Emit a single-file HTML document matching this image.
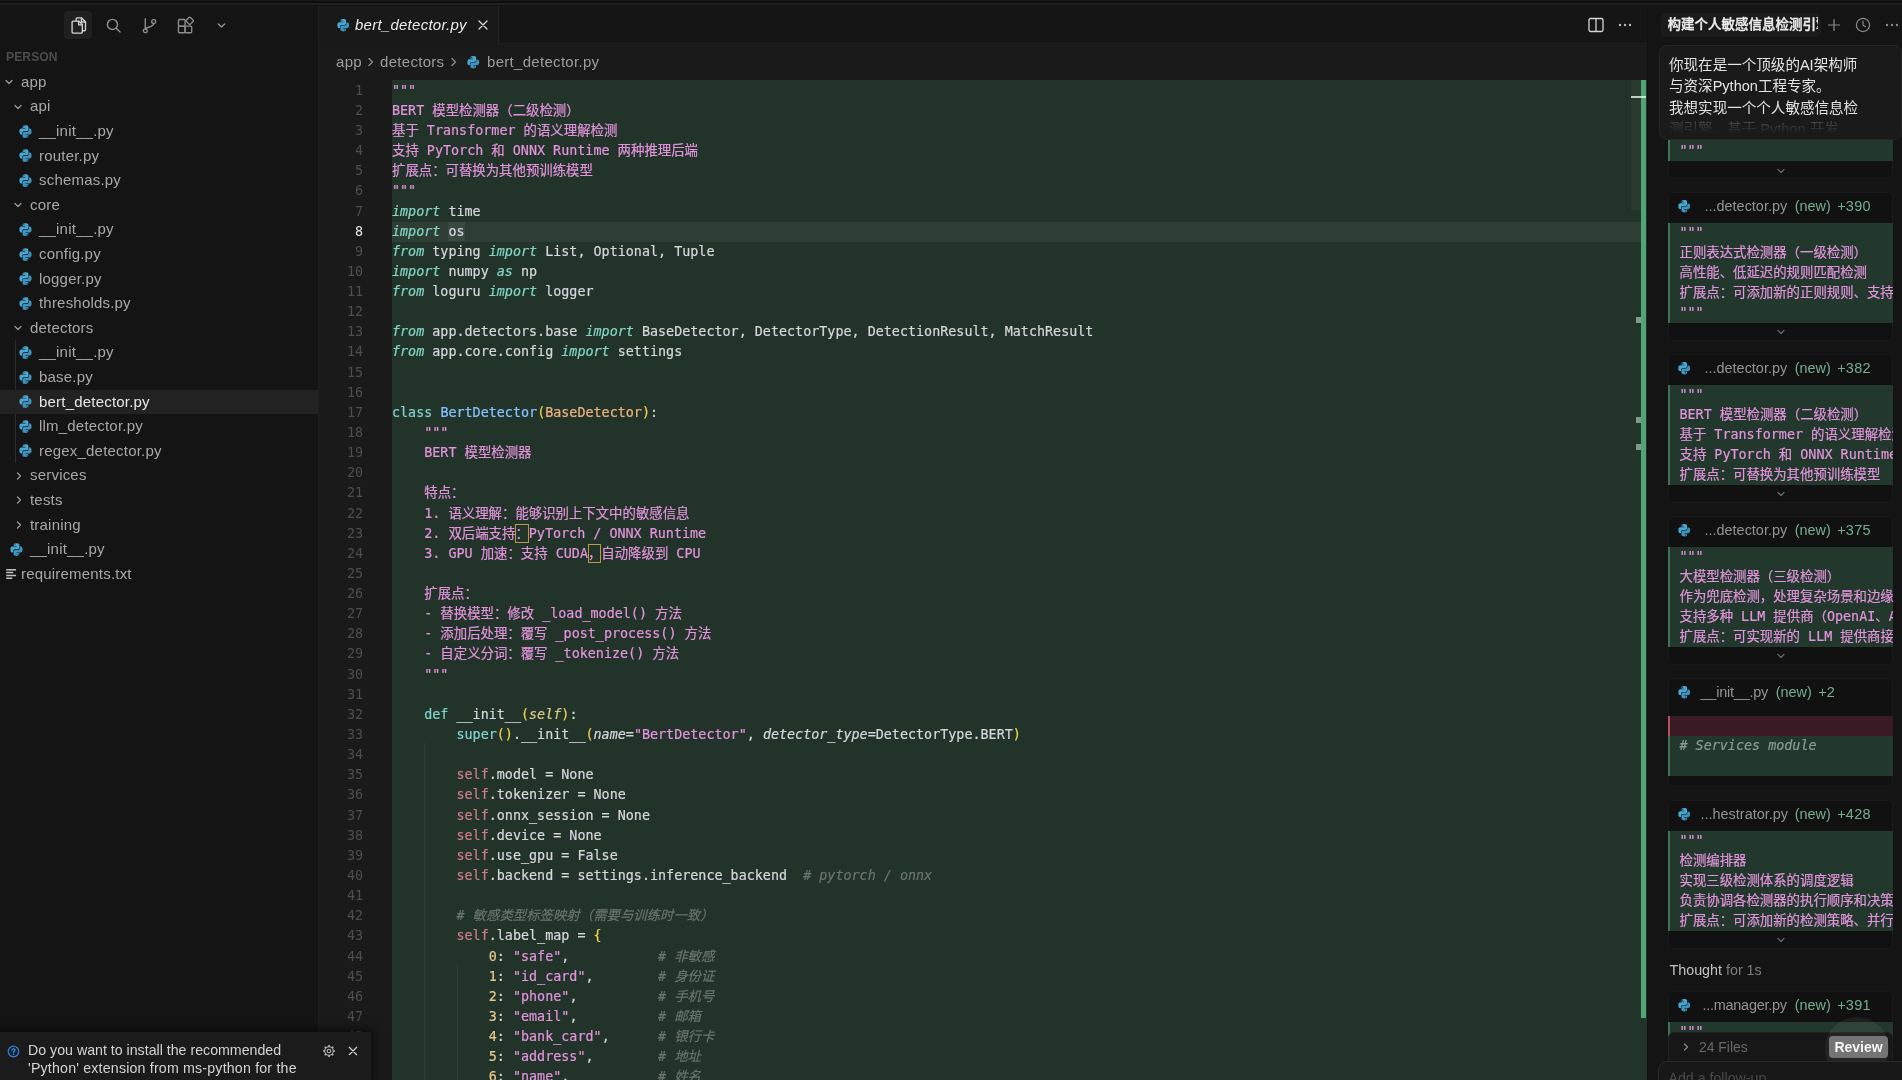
<!DOCTYPE html>
<html lang="zh">
<head>
<meta charset="utf-8">
<title>bert_detector.py — person</title>
<style>
*{box-sizing:border-box;margin:0;padding:0}
html,body{width:1902px;height:1080px;overflow:hidden;background:#141414}
body{position:relative;font-family:"Liberation Sans","Noto Sans CJK SC",sans-serif;color:#cfcfcf;-webkit-font-smoothing:antialiased}
.abs{position:absolute}
#topline{position:absolute;left:0;top:0;width:1902px;height:6px;background:linear-gradient(#181818 0,#181818 1.500px,#0f0f0f 1.500px,#0f0f0f 3.500px,#1f1f1f 3.500px,#1f1f1f 5.500px,#141414 5.500px);z-index:20}
/* ---------- sidebar ---------- */
#side{position:absolute;left:0;top:5px;width:318px;height:1075px;background:#141414}
#sideborder{position:absolute;left:317.500px;top:5px;width:1.500px;height:1075px;background:#1e1e1e}
.tb{position:absolute;top:11px;width:28px;height:28px}
.tb svg{position:absolute;left:4.500px;top:4.500px;width:19px;height:19px}.tb svg.big{left:3.500px;top:3.700px;width:21px;height:21px}
#person{position:absolute;left:6px;top:45px;font-size:12.1px;font-weight:bold;color:#4c4c4c;letter-spacing:.1px}
.row{position:absolute;left:0;width:318px;height:24.6px;font-size:15px;letter-spacing:.2px;color:#a8a8a8}
.row.sel{background:#222222;color:#e8e8e8}
.row .ic{position:absolute;top:4.3px;width:16px;height:16px}
.row .lb{position:absolute;top:0;line-height:24.6px;white-space:pre}
svg.py{width:15px;height:15px;display:block;margin:.5px}.sm svg.py{width:14.500px;height:14.500px;margin:.75px}svg.chev{width:16px;height:16px;display:block}
#guide{position:absolute;left:14.500px;top:335px;width:1px;height:123px;background:#2c2c2c}
/* ---------- editor ---------- */
#editor{position:absolute;left:319px;top:5px;width:1328px;height:1075px;background:#1a1a1a}
#tabbar{position:absolute;left:0;top:0;width:1329px;height:39px;background:#151515;border-bottom:1px solid #1f1f1f}
#tab{position:absolute;left:0;top:0;width:180px;height:40px;background:#191919;border-right:1px solid #222}
#tab .nm{position:absolute;left:36px;top:0;line-height:40px;font-size:15px;font-style:italic;color:#ececec;letter-spacing:.25px;white-space:pre}
#crumbs{position:absolute;left:0;top:40px;width:1329px;height:34px;font-size:15px;color:#9d9d9d;letter-spacing:.3px}
#crumbs span{position:absolute;top:0;line-height:34px;white-space:pre}
#green{position:absolute;left:73px;top:75px;width:1255px;height:1000px;background:#22332a}
#curline{position:absolute;left:73px;top:216.65px;width:1249px;height:20.1px;background:#2e3e35}
.ln{position:absolute;left:0;width:44px;height:20.13px;line-height:20.13px;text-align:right;font-family:"DejaVu Sans Mono","Liberation Mono",monospace;font-size:13.4px;color:#4e4e4e}
.ln.cur{color:#e6e6e6}
.cl{position:absolute;left:73px;height:20.13px;line-height:20.13px;white-space:pre;-webkit-text-stroke:.2px;font-family:"DejaVu Sans Mono","Liberation Mono","Noto Sans CJK SC",monospace;font-size:13.4px;color:#d6d6dd}
#code{position:absolute;left:0;top:-5px;width:1329px;height:1080px}
.k{color:#83d6c5;font-style:italic}
.d{color:#e394dc}
.bx{color:#e394dc;outline:1px solid #b99a45;outline-offset:-1px;padding:1.500px 0 2px}
.c{color:#6a746e;font-style:italic}
.s{color:#e394dc}
.kw{color:#82d2ce}
.cn{color:#87c3ff}
.ih{color:#efb080}
.p{color:#f1d04a}
.sf{color:#cc7c8a}
.slf{color:#d9c98a;font-style:italic}
.fn{color:#d6d6dd}
.pr{color:#d6d6dd;font-style:italic}
.n{color:#ebc88d}
.hl{background:#3a4941;display:inline-block;height:19.5px;line-height:20.13px;vertical-align:top}
.ig{position:absolute;width:1px;background:#2b3f35}
/* scrollbar / overview */
#ovr{position:absolute;left:1312px;top:75px;width:10px;height:130px;background:#2a3a31}
#ovg{position:absolute;left:1322px;top:75px;width:5px;height:938px;background:#4fa573}
.mk{position:absolute;background:#7f9a8a}
/* ---------- chat panel ---------- */
#chat{position:absolute;left:1647px;top:5px;width:254px;height:1075px;background:#141414}
#chatborder{position:absolute;left:1647px;top:5px;width:1px;height:1075px;background:#111}
#ctab{position:absolute;left:13.500px;top:8px;width:160px;height:24px;border-radius:5px;background:#1b1b1b;overflow:hidden}
#ctab span{position:absolute;left:7px;top:0;line-height:24px;font-size:13.500px;font-weight:500;color:#ededed;white-space:pre;-webkit-text-stroke:.35px #ededed;width:150px;overflow:hidden}
#bubble{position:absolute;left:11.500px;top:40px;width:243px;height:94.500px;border-radius:8px;background:#1a1a1a;border:1px solid #262626;overflow:hidden;z-index:5}
#bubble div{position:absolute;left:9.500px;font-size:14.55px;line-height:21.5px;color:#e4e4e4;white-space:pre}
#bubble .fade{position:absolute;left:0;top:70px;width:248px;height:24px;background:linear-gradient(rgba(26,26,26,.15),#1a1a1a 75%)}
.blk{position:absolute;left:20px;width:225px;}
.bh{position:absolute;left:0;width:225px;height:30px;font-size:14.45px;color:#939393}
.bh span{position:absolute;top:0;line-height:30px;white-space:pre}
.bh .g{color:#74ae8f}
.bc{position:absolute;left:0;width:225px;background:#22382c;border-left:2.500px solid #3d7355;overflow:hidden}
.bc div{position:absolute;left:9.500px;white-space:pre;-webkit-text-stroke:.2px;font-family:"DejaVu Sans Mono","Liberation Mono","Noto Sans CJK SC",monospace;font-size:13.4px;line-height:20px;color:#e394dc}
.cv{position:absolute;left:104px;width:16px;height:16px}
.bf{position:absolute;left:0;width:225px;background:#101010}
.fr{position:absolute;left:21px;width:225px;background:#111111;border:1px solid #1a1a1a;border-radius:5px}
.bc.red{background:#3a1a25;border-left-color:#b5525c}
.bc .cm{color:#8c9a92;font-style:italic}
.th{position:absolute;font-size:14.3px;line-height:20px;white-space:pre}
#bbar{position:absolute;left:21px;top:1027px;width:225px;height:29px;background:#171717;border:1px solid #202020;border-bottom:none;border-radius:6px 6px 0 0;z-index:6}
#review{position:absolute;left:160px;top:3px;width:59px;height:22px;border-radius:4px;background:#747474;color:#f4f4f4;font-size:14px;font-weight:bold;text-align:center;line-height:22px}
#halo{position:absolute;left:156px;top:-16px;width:64px;height:64px;border-radius:50%;background:rgba(255,255,255,.06)}
#inp{position:absolute;left:10.500px;top:1056px;width:260px;height:40px;background:#181818;border:1px solid #2a2a2a;border-radius:9px;z-index:7}
#inp span{position:absolute;left:10px;top:8px;font-size:14.2px;color:#4a4a4a;white-space:pre}
/* notification */
#toast{position:absolute;left:0;top:1032px;width:371px;height:48px;background:#1b1b1b;box-shadow:0 0 9px 3px rgba(0,0,0,.55)}
#toast div{position:absolute;left:28px;font-size:14.2px;color:#d4d4d4;white-space:pre;line-height:18px}
#root{position:absolute;left:0;top:0;width:1902px;height:1080px;will-change:transform}
</style>
</head>
<body>
<div id="root">
<div id="topline"></div>

<!-- ================= SIDEBAR ================= -->
<div id="side">
  <div class="tb" style="left:64px;top:6px;background:#202020;border-radius:3px">
    <svg class="big" viewBox="0 0 18 18" fill="none" stroke="#d4d4d4" stroke-width="1.150" stroke-linejoin="round" stroke-linecap="round"><path d="M7 4.800V3.500c0-.6.400-1 1-1h3.700l3.300 3.300v6.700c0 .6-.4 1-1 1h-1.700"/><path d="M11.500 2.700v3.300h3.300"/><path d="M4.500 5.200h4.800l3 3v6.300c0 .6-.4 1-1 1H4.500c-.6 0-1-.4-1-1V6.200c0-.6.400-1 1-1z"/><path d="M9.100 5.400v3h3"/></svg>
  </div>
  <div class="tb" style="left:99px;top:6px">
    <svg viewBox="0 0 18 18" fill="none" stroke="#8e8e8e" stroke-width="1.4" stroke-linecap="round"><circle cx="8" cy="8" r="4.800"/><path d="M11.600 11.600l3.600 3.600"/></svg>
  </div>
  <div class="tb" style="left:135px;top:6px">
    <svg viewBox="0 0 18 18" fill="none" stroke="#8e8e8e" stroke-width="1.3" stroke-linecap="round"><circle cx="5" cy="14" r="1.800"/><circle cx="13" cy="5.300" r="1.900"/><path d="M5 2.500v9.700M13 7.200c0 3.800-7 2.600-7.600 5.400"/></svg>
  </div>
  <div class="tb" style="left:171px;top:6px">
    <svg viewBox="0 0 18 18" fill="none" stroke="#8e8e8e" stroke-width="1.3" stroke-linejoin="round"><rect x="2.300" y="3.300" width="6.300" height="6.300" rx="1"/><rect x="2.300" y="9.600" width="6.300" height="6.300" rx="1"/><rect x="8.600" y="9.600" width="6.300" height="6.300" rx="1"/><rect x="10.300" y="1.900" width="5.400" height="5.400" rx="1" transform="rotate(45 13 4.600)"/></svg>
  </div>
  <div class="tb" style="left:207px;top:6px">
    <svg viewBox="0 0 18 18" fill="none" stroke="#8e8e8e" stroke-width="1.400" stroke-linecap="round" stroke-linejoin="round"><path d="M6 7.500l3 3 3-3"/></svg>
  </div>
  <div id="person">PERSON</div>
  <div id="guide"></div>
  <div id="tree" style="position:absolute;left:0;top:-5px;width:318px;height:1080px">
<div class="row" style="top:69.70px"><span class="ic" style="left:0.6999999999999993px"><svg class="chev" viewBox="0 0 16 16"><path d="M5 6.500l3 3 3-3" fill="none" stroke="#9a9a9a" stroke-width="1.300" stroke-linecap="round" stroke-linejoin="round"/></svg></span><span class="lb" style="left:21px">app</span></div>
<div class="row" style="top:94.30px"><span class="ic" style="left:9.7px"><svg class="chev" viewBox="0 0 16 16"><path d="M5 6.500l3 3 3-3" fill="none" stroke="#9a9a9a" stroke-width="1.300" stroke-linecap="round" stroke-linejoin="round"/></svg></span><span class="lb" style="left:30px">api</span></div>
<div class="row" style="top:118.90px"><span class="ic" style="left:17px"><svg class="py" viewBox="0 0 16 16"><path d="M7.9 1.2c-2.6 0-2.9 1.1-2.9 1.1v1.9h3v.6H3.6S1.5 4.6 1.5 7.9c0 3.300 1.800 3.200 1.800 3.200h1.300V9.400s-.1-1.800 1.800-1.800h3s1.700 0 1.700-1.700V3s.3-1.800-3.200-1.800zM6.300 2.300a.55.55 0 1 1 0 1.100.55.55 0 0 1 0-1.100z" fill="#4aa5cf"/><path d="M8.100 14.800c2.600 0 2.900-1.100 2.900-1.100v-1.900H8v-.6h4.400s2.100.2 2.100-3.100c0-3.300-1.800-3.200-1.800-3.200h-1.300v1.700s.1 1.800-1.800 1.800h-3s-1.700 0-1.700 1.700V13s-.3 1.800 3.200 1.800zm1.600-1.100a.55.55 0 1 1 0-1.100.55.55 0 0 1 0 1.100z" fill="#3d93bf"/></svg></span><span class="lb" style="left:39px">__init__.py</span></div>
<div class="row" style="top:143.50px"><span class="ic" style="left:17px"><svg class="py" viewBox="0 0 16 16"><path d="M7.9 1.2c-2.6 0-2.9 1.1-2.9 1.1v1.9h3v.6H3.6S1.5 4.6 1.5 7.9c0 3.300 1.800 3.200 1.800 3.200h1.300V9.400s-.1-1.800 1.800-1.800h3s1.700 0 1.700-1.700V3s.3-1.800-3.200-1.800zM6.300 2.300a.55.55 0 1 1 0 1.100.55.55 0 0 1 0-1.100z" fill="#4aa5cf"/><path d="M8.100 14.800c2.600 0 2.900-1.100 2.900-1.100v-1.900H8v-.6h4.400s2.100.2 2.100-3.100c0-3.300-1.800-3.200-1.800-3.200h-1.300v1.700s.1 1.800-1.800 1.800h-3s-1.700 0-1.700 1.700V13s-.3 1.800 3.200 1.800zm1.600-1.100a.55.55 0 1 1 0-1.100.55.55 0 0 1 0 1.100z" fill="#3d93bf"/></svg></span><span class="lb" style="left:39px">router.py</span></div>
<div class="row" style="top:168.10px"><span class="ic" style="left:17px"><svg class="py" viewBox="0 0 16 16"><path d="M7.9 1.2c-2.6 0-2.9 1.1-2.9 1.1v1.9h3v.6H3.6S1.5 4.6 1.5 7.9c0 3.300 1.800 3.200 1.800 3.200h1.300V9.400s-.1-1.800 1.800-1.800h3s1.700 0 1.700-1.700V3s.3-1.800-3.200-1.800zM6.300 2.300a.55.55 0 1 1 0 1.100.55.55 0 0 1 0-1.100z" fill="#4aa5cf"/><path d="M8.100 14.800c2.600 0 2.900-1.100 2.900-1.100v-1.900H8v-.6h4.400s2.100.2 2.100-3.100c0-3.300-1.800-3.200-1.800-3.200h-1.300v1.700s.1 1.800-1.800 1.800h-3s-1.700 0-1.700 1.700V13s-.3 1.800 3.200 1.800zm1.600-1.100a.55.55 0 1 1 0-1.100.55.55 0 0 1 0 1.100z" fill="#3d93bf"/></svg></span><span class="lb" style="left:39px">schemas.py</span></div>
<div class="row" style="top:192.70px"><span class="ic" style="left:9.7px"><svg class="chev" viewBox="0 0 16 16"><path d="M5 6.500l3 3 3-3" fill="none" stroke="#9a9a9a" stroke-width="1.300" stroke-linecap="round" stroke-linejoin="round"/></svg></span><span class="lb" style="left:30px">core</span></div>
<div class="row" style="top:217.30px"><span class="ic" style="left:17px"><svg class="py" viewBox="0 0 16 16"><path d="M7.9 1.2c-2.6 0-2.9 1.1-2.9 1.1v1.9h3v.6H3.6S1.5 4.6 1.5 7.9c0 3.300 1.800 3.200 1.800 3.200h1.300V9.400s-.1-1.800 1.800-1.800h3s1.700 0 1.700-1.700V3s.3-1.800-3.200-1.800zM6.300 2.300a.55.55 0 1 1 0 1.100.55.55 0 0 1 0-1.100z" fill="#4aa5cf"/><path d="M8.100 14.800c2.600 0 2.900-1.100 2.900-1.100v-1.900H8v-.6h4.400s2.100.2 2.100-3.100c0-3.300-1.800-3.200-1.800-3.200h-1.300v1.700s.1 1.800-1.800 1.800h-3s-1.700 0-1.700 1.700V13s-.3 1.800 3.200 1.800zm1.600-1.100a.55.55 0 1 1 0-1.100.55.55 0 0 1 0 1.100z" fill="#3d93bf"/></svg></span><span class="lb" style="left:39px">__init__.py</span></div>
<div class="row" style="top:241.90px"><span class="ic" style="left:17px"><svg class="py" viewBox="0 0 16 16"><path d="M7.9 1.2c-2.6 0-2.9 1.1-2.9 1.1v1.9h3v.6H3.6S1.5 4.6 1.5 7.9c0 3.300 1.800 3.200 1.800 3.200h1.300V9.400s-.1-1.800 1.800-1.800h3s1.700 0 1.700-1.700V3s.3-1.800-3.200-1.800zM6.300 2.300a.55.55 0 1 1 0 1.100.55.55 0 0 1 0-1.100z" fill="#4aa5cf"/><path d="M8.100 14.800c2.600 0 2.900-1.100 2.900-1.100v-1.900H8v-.6h4.400s2.100.2 2.100-3.100c0-3.300-1.800-3.200-1.800-3.200h-1.300v1.700s.1 1.800-1.800 1.800h-3s-1.700 0-1.700 1.700V13s-.3 1.800 3.200 1.800zm1.600-1.100a.55.55 0 1 1 0-1.100.55.55 0 0 1 0 1.100z" fill="#3d93bf"/></svg></span><span class="lb" style="left:39px">config.py</span></div>
<div class="row" style="top:266.50px"><span class="ic" style="left:17px"><svg class="py" viewBox="0 0 16 16"><path d="M7.9 1.2c-2.6 0-2.9 1.1-2.9 1.1v1.9h3v.6H3.6S1.5 4.6 1.5 7.9c0 3.300 1.800 3.200 1.800 3.200h1.300V9.400s-.1-1.800 1.800-1.800h3s1.700 0 1.700-1.700V3s.3-1.800-3.200-1.800zM6.300 2.300a.55.55 0 1 1 0 1.100.55.55 0 0 1 0-1.100z" fill="#4aa5cf"/><path d="M8.100 14.800c2.600 0 2.900-1.100 2.900-1.100v-1.900H8v-.6h4.400s2.100.2 2.100-3.100c0-3.300-1.800-3.200-1.800-3.200h-1.300v1.700s.1 1.800-1.800 1.800h-3s-1.700 0-1.700 1.700V13s-.3 1.800 3.200 1.800zm1.600-1.100a.55.55 0 1 1 0-1.100.55.55 0 0 1 0 1.100z" fill="#3d93bf"/></svg></span><span class="lb" style="left:39px">logger.py</span></div>
<div class="row" style="top:291.10px"><span class="ic" style="left:17px"><svg class="py" viewBox="0 0 16 16"><path d="M7.9 1.2c-2.6 0-2.9 1.1-2.9 1.1v1.9h3v.6H3.6S1.5 4.6 1.5 7.9c0 3.300 1.800 3.200 1.800 3.200h1.300V9.400s-.1-1.800 1.800-1.800h3s1.700 0 1.700-1.700V3s.3-1.800-3.200-1.800zM6.300 2.300a.55.55 0 1 1 0 1.100.55.55 0 0 1 0-1.100z" fill="#4aa5cf"/><path d="M8.100 14.800c2.600 0 2.900-1.100 2.900-1.100v-1.900H8v-.6h4.400s2.100.2 2.100-3.100c0-3.300-1.800-3.200-1.800-3.200h-1.300v1.700s.1 1.800-1.800 1.800h-3s-1.700 0-1.700 1.700V13s-.3 1.800 3.200 1.800zm1.600-1.100a.55.55 0 1 1 0-1.100.55.55 0 0 1 0 1.100z" fill="#3d93bf"/></svg></span><span class="lb" style="left:39px">thresholds.py</span></div>
<div class="row" style="top:315.70px"><span class="ic" style="left:9.7px"><svg class="chev" viewBox="0 0 16 16"><path d="M5 6.500l3 3 3-3" fill="none" stroke="#9a9a9a" stroke-width="1.300" stroke-linecap="round" stroke-linejoin="round"/></svg></span><span class="lb" style="left:30px">detectors</span></div>
<div class="row" style="top:340.30px"><span class="ic" style="left:17px"><svg class="py" viewBox="0 0 16 16"><path d="M7.9 1.2c-2.6 0-2.9 1.1-2.9 1.1v1.9h3v.6H3.6S1.5 4.6 1.5 7.9c0 3.300 1.800 3.200 1.800 3.200h1.300V9.400s-.1-1.800 1.800-1.800h3s1.700 0 1.700-1.700V3s.3-1.800-3.200-1.800zM6.300 2.300a.55.55 0 1 1 0 1.100.55.55 0 0 1 0-1.100z" fill="#4aa5cf"/><path d="M8.100 14.800c2.600 0 2.900-1.100 2.900-1.100v-1.900H8v-.6h4.400s2.100.2 2.100-3.100c0-3.300-1.800-3.200-1.800-3.200h-1.300v1.700s.1 1.800-1.800 1.800h-3s-1.700 0-1.700 1.700V13s-.3 1.800 3.200 1.800zm1.600-1.100a.55.55 0 1 1 0-1.100.55.55 0 0 1 0 1.100z" fill="#3d93bf"/></svg></span><span class="lb" style="left:39px">__init__.py</span></div>
<div class="row" style="top:364.90px"><span class="ic" style="left:17px"><svg class="py" viewBox="0 0 16 16"><path d="M7.9 1.2c-2.6 0-2.9 1.1-2.9 1.1v1.9h3v.6H3.6S1.5 4.6 1.5 7.9c0 3.300 1.800 3.200 1.800 3.200h1.300V9.400s-.1-1.800 1.800-1.800h3s1.700 0 1.700-1.700V3s.3-1.800-3.200-1.800zM6.300 2.300a.55.55 0 1 1 0 1.100.55.55 0 0 1 0-1.100z" fill="#4aa5cf"/><path d="M8.100 14.800c2.600 0 2.900-1.100 2.900-1.100v-1.900H8v-.6h4.400s2.100.2 2.100-3.100c0-3.300-1.800-3.200-1.800-3.200h-1.300v1.700s.1 1.800-1.800 1.800h-3s-1.700 0-1.700 1.700V13s-.3 1.800 3.200 1.800zm1.600-1.100a.55.55 0 1 1 0-1.100.55.55 0 0 1 0 1.100z" fill="#3d93bf"/></svg></span><span class="lb" style="left:39px">base.py</span></div>
<div class="row sel" style="top:389.50px"><span class="ic" style="left:17px"><svg class="py" viewBox="0 0 16 16"><path d="M7.9 1.2c-2.6 0-2.9 1.1-2.9 1.1v1.9h3v.6H3.6S1.5 4.6 1.5 7.9c0 3.300 1.800 3.200 1.800 3.200h1.300V9.400s-.1-1.800 1.800-1.800h3s1.700 0 1.700-1.700V3s.3-1.800-3.200-1.800zM6.300 2.300a.55.55 0 1 1 0 1.100.55.55 0 0 1 0-1.100z" fill="#4aa5cf"/><path d="M8.100 14.800c2.600 0 2.900-1.100 2.900-1.100v-1.900H8v-.6h4.400s2.100.2 2.100-3.100c0-3.300-1.800-3.200-1.800-3.200h-1.300v1.700s.1 1.800-1.800 1.800h-3s-1.700 0-1.700 1.700V13s-.3 1.800 3.200 1.800zm1.600-1.100a.55.55 0 1 1 0-1.100.55.55 0 0 1 0 1.100z" fill="#3d93bf"/></svg></span><span class="lb" style="left:39px">bert_detector.py</span></div>
<div class="row" style="top:414.10px"><span class="ic" style="left:17px"><svg class="py" viewBox="0 0 16 16"><path d="M7.9 1.2c-2.6 0-2.9 1.1-2.9 1.1v1.9h3v.6H3.6S1.5 4.6 1.5 7.9c0 3.300 1.800 3.200 1.800 3.200h1.300V9.400s-.1-1.800 1.800-1.800h3s1.700 0 1.700-1.700V3s.3-1.800-3.200-1.800zM6.300 2.300a.55.55 0 1 1 0 1.100.55.55 0 0 1 0-1.100z" fill="#4aa5cf"/><path d="M8.100 14.800c2.600 0 2.900-1.100 2.900-1.100v-1.900H8v-.6h4.400s2.100.2 2.100-3.100c0-3.300-1.800-3.200-1.800-3.200h-1.300v1.700s.1 1.800-1.800 1.800h-3s-1.700 0-1.700 1.700V13s-.3 1.800 3.200 1.800zm1.600-1.100a.55.55 0 1 1 0-1.100.55.55 0 0 1 0 1.100z" fill="#3d93bf"/></svg></span><span class="lb" style="left:39px">llm_detector.py</span></div>
<div class="row" style="top:438.70px"><span class="ic" style="left:17px"><svg class="py" viewBox="0 0 16 16"><path d="M7.9 1.2c-2.6 0-2.9 1.1-2.9 1.1v1.9h3v.6H3.6S1.5 4.6 1.5 7.9c0 3.300 1.800 3.200 1.800 3.200h1.300V9.400s-.1-1.800 1.800-1.800h3s1.700 0 1.700-1.700V3s.3-1.800-3.200-1.800zM6.300 2.300a.55.55 0 1 1 0 1.100.55.55 0 0 1 0-1.100z" fill="#4aa5cf"/><path d="M8.100 14.800c2.600 0 2.900-1.100 2.900-1.100v-1.900H8v-.6h4.400s2.100.2 2.100-3.100c0-3.300-1.800-3.200-1.800-3.200h-1.300v1.700s.1 1.800-1.800 1.800h-3s-1.700 0-1.700 1.700V13s-.3 1.800 3.200 1.800zm1.600-1.100a.55.55 0 1 1 0-1.100.55.55 0 0 1 0 1.100z" fill="#3d93bf"/></svg></span><span class="lb" style="left:39px">regex_detector.py</span></div>
<div class="row" style="top:463.30px"><span class="ic" style="left:10.5px"><svg class="chev" viewBox="0 0 16 16"><path d="M6.500 5l3 3-3 3" fill="none" stroke="#9a9a9a" stroke-width="1.300" stroke-linecap="round" stroke-linejoin="round"/></svg></span><span class="lb" style="left:30px">services</span></div>
<div class="row" style="top:487.90px"><span class="ic" style="left:10.5px"><svg class="chev" viewBox="0 0 16 16"><path d="M6.500 5l3 3-3 3" fill="none" stroke="#9a9a9a" stroke-width="1.300" stroke-linecap="round" stroke-linejoin="round"/></svg></span><span class="lb" style="left:30px">tests</span></div>
<div class="row" style="top:512.50px"><span class="ic" style="left:10.5px"><svg class="chev" viewBox="0 0 16 16"><path d="M6.500 5l3 3-3 3" fill="none" stroke="#9a9a9a" stroke-width="1.300" stroke-linecap="round" stroke-linejoin="round"/></svg></span><span class="lb" style="left:30px">training</span></div>
<div class="row" style="top:537.10px"><span class="ic" style="left:8px"><svg class="py" viewBox="0 0 16 16"><path d="M7.9 1.2c-2.6 0-2.9 1.1-2.9 1.1v1.9h3v.6H3.6S1.5 4.6 1.5 7.9c0 3.300 1.800 3.200 1.800 3.200h1.300V9.400s-.1-1.800 1.800-1.800h3s1.700 0 1.700-1.700V3s.3-1.800-3.200-1.800zM6.300 2.300a.55.55 0 1 1 0 1.100.55.55 0 0 1 0-1.100z" fill="#4aa5cf"/><path d="M8.100 14.800c2.600 0 2.900-1.100 2.900-1.100v-1.900H8v-.6h4.400s2.100.2 2.100-3.100c0-3.300-1.800-3.200-1.800-3.200h-1.300v1.700s.1 1.800-1.800 1.800h-3s-1.700 0-1.700 1.700V13s-.3 1.800 3.200 1.800zm1.600-1.100a.55.55 0 1 1 0-1.100.55.55 0 0 1 0 1.100z" fill="#3d93bf"/></svg></span><span class="lb" style="left:30px">__init__.py</span></div>
<div class="row" style="top:561.70px"><span class="ic" style="left:1px"><svg class="py" viewBox="0 0 16 16"><path d="M4.500 4h10.500M4.500 7h7.500M4.500 10h10.500M4.500 13h6.500" fill="none" stroke="#c4c4c4" stroke-width="1.600"/></svg></span><span class="lb" style="left:21px">requirements.txt</span></div>
  </div>
</div>
<div id="sideborder"></div>

<!-- ================= EDITOR ================= -->
<div id="editor">
  <div id="tabbar">
    <div id="tab">
      <span class="abs sm" style="left:16px;top:12.500px;width:16px;height:16px"><svg class="py" viewBox="0 0 16 16"><path d="M7.9 1.2c-2.6 0-2.9 1.1-2.9 1.1v1.9h3v.6H3.6S1.5 4.6 1.5 7.9c0 3.300 1.800 3.200 1.800 3.200h1.300V9.400s-.1-1.800 1.800-1.800h3s1.700 0 1.700-1.700V3s.3-1.800-3.200-1.800zM6.300 2.300a.55.55 0 1 1 0 1.100.55.55 0 0 1 0-1.100z" fill="#4aa5cf"/><path d="M8.100 14.800c2.600 0 2.900-1.100 2.900-1.100v-1.900H8v-.6h4.400s2.100.2 2.100-3.100c0-3.300-1.800-3.200-1.800-3.200h-1.300v1.700s.1 1.800-1.800 1.800h-3s-1.700 0-1.700 1.700V13s-.3 1.800 3.200 1.800zm1.600-1.100a.55.55 0 1 1 0-1.100.55.55 0 0 1 0 1.100z" fill="#3d93bf"/></svg></span>
      <span class="nm">bert_detector.py</span>
      <svg class="abs" style="left:156px;top:12px" width="16" height="16" viewBox="0 0 16 16"><path d="M4 4l8 8M12 4l-8 8" stroke="#d8d8d8" stroke-width="1.300" stroke-linecap="round"/></svg>
    </div>
    <svg class="abs" style="left:1268px;top:11px" width="18" height="18" viewBox="0 0 18 18" fill="none" stroke="#d6d6d6" stroke-width="1.300"><rect x="2" y="2.500" width="14" height="13" rx="1.500"/><path d="M9 2.500v13"/></svg>
    <svg class="abs" style="left:1297px;top:11px" width="18" height="18" viewBox="0 0 18 18" fill="#bdbdbd"><circle cx="4" cy="9" r="1.200"/><circle cx="9" cy="9" r="1.200"/><circle cx="14" cy="9" r="1.200"/></svg>
  </div>
  <div id="crumbs">
    <span style="left:17px">app</span>
    <svg class="abs" style="left:44px;top:9px" width="16" height="16" viewBox="0 0 16 16"><path d="M6 4.500l3.500 3.500-3.500 3.500" fill="none" stroke="#8d8d8d" stroke-width="1.300" stroke-linecap="round" stroke-linejoin="round"/></svg>
    <span style="left:61px">detectors</span>
    <svg class="abs" style="left:127px;top:9px" width="16" height="16" viewBox="0 0 16 16"><path d="M6 4.500l3.500 3.500-3.500 3.500" fill="none" stroke="#8d8d8d" stroke-width="1.300" stroke-linecap="round" stroke-linejoin="round"/></svg>
    <span class="abs sm" style="left:146.400px;top:9.500px;width:16px;height:16px"><svg class="py" viewBox="0 0 16 16"><path d="M7.9 1.2c-2.6 0-2.9 1.1-2.9 1.1v1.9h3v.6H3.6S1.5 4.6 1.5 7.9c0 3.300 1.800 3.200 1.800 3.200h1.300V9.400s-.1-1.800 1.800-1.800h3s1.700 0 1.700-1.700V3s.3-1.800-3.200-1.800zM6.300 2.300a.55.55 0 1 1 0 1.100.55.55 0 0 1 0-1.100z" fill="#4aa5cf"/><path d="M8.100 14.800c2.600 0 2.900-1.100 2.900-1.100v-1.900H8v-.6h4.400s2.100.2 2.100-3.100c0-3.300-1.800-3.200-1.800-3.200h-1.300v1.700s.1 1.800-1.800 1.800h-3s-1.700 0-1.700 1.700V13s-.3 1.800 3.200 1.800zm1.600-1.100a.55.55 0 1 1 0-1.100.55.55 0 0 1 0 1.100z" fill="#3d93bf"/></svg></span>
    <span style="left:168px">bert_detector.py</span>
  </div>
  <div id="green"></div>
  <div id="curline"></div>
  <div id="code">
<div class="ln" style="top:80.70px">1</div>
<div class="cl" style="top:80.70px"><span class="d">"""</span></div>
<div class="ln" style="top:100.84px">2</div>
<div class="cl" style="top:100.84px"><span class="d">BERT 模型检测器（二级检测）</span></div>
<div class="ln" style="top:120.97px">3</div>
<div class="cl" style="top:120.97px"><span class="d">基于 Transformer 的语义理解检测</span></div>
<div class="ln" style="top:141.11px">4</div>
<div class="cl" style="top:141.11px"><span class="d">支持 PyTorch 和 ONNX Runtime 两种推理后端</span></div>
<div class="ln" style="top:161.24px">5</div>
<div class="cl" style="top:161.24px"><span class="d">扩展点：可替换为其他预训练模型</span></div>
<div class="ln" style="top:181.38px">6</div>
<div class="cl" style="top:181.38px"><span class="d">"""</span></div>
<div class="ln" style="top:201.51px">7</div>
<div class="cl" style="top:201.51px"><span class="k">import</span> time</div>
<div class="ln cur" style="top:221.65px">8</div>
<div class="cl" style="top:221.65px"><span class="k">import</span> <span class="hl">os</span></div>
<div class="ln" style="top:241.78px">9</div>
<div class="cl" style="top:241.78px"><span class="k">from</span> typing <span class="k">import</span> List, Optional, Tuple</div>
<div class="ln" style="top:261.92px">10</div>
<div class="cl" style="top:261.92px"><span class="k">import</span> numpy <span class="k">as</span> np</div>
<div class="ln" style="top:282.05px">11</div>
<div class="cl" style="top:282.05px"><span class="k">from</span> loguru <span class="k">import</span> logger</div>
<div class="ln" style="top:302.19px">12</div>
<div class="cl" style="top:302.19px"></div>
<div class="ln" style="top:322.32px">13</div>
<div class="cl" style="top:322.32px"><span class="k">from</span> app.detectors.base <span class="k">import</span> BaseDetector, DetectorType, DetectionResult, MatchResult</div>
<div class="ln" style="top:342.45px">14</div>
<div class="cl" style="top:342.45px"><span class="k">from</span> app.core.config <span class="k">import</span> settings</div>
<div class="ln" style="top:362.59px">15</div>
<div class="cl" style="top:362.59px"></div>
<div class="ln" style="top:382.73px">16</div>
<div class="cl" style="top:382.73px"></div>
<div class="ln" style="top:402.86px">17</div>
<div class="cl" style="top:402.86px"><span class="kw">class</span> <span class="cn">BertDetector</span><span class="p">(</span><span class="ih">BaseDetector</span><span class="p">)</span>:</div>
<div class="ln" style="top:423.00px">18</div>
<div class="cl" style="top:423.00px"><span class="d">    """</span></div>
<div class="ln" style="top:443.13px">19</div>
<div class="cl" style="top:443.13px"><span class="d">    BERT 模型检测器</span></div>
<div class="ln" style="top:463.27px">20</div>
<div class="cl" style="top:463.27px"></div>
<div class="ln" style="top:483.40px">21</div>
<div class="cl" style="top:483.40px"><span class="d">    特点：</span></div>
<div class="ln" style="top:503.54px">22</div>
<div class="cl" style="top:503.54px"><span class="d">    1. 语义理解：能够识别上下文中的敏感信息</span></div>
<div class="ln" style="top:523.67px">23</div>
<div class="cl" style="top:523.67px"><span class="d">    2. 双后端支持</span><span class="bx">：</span><span class="d">PyTorch / ONNX Runtime</span></div>
<div class="ln" style="top:543.81px">24</div>
<div class="cl" style="top:543.81px"><span class="d">    3. GPU 加速：支持 CUDA</span><span class="bx">，</span><span class="d">自动降级到 CPU</span></div>
<div class="ln" style="top:563.94px">25</div>
<div class="cl" style="top:563.94px"></div>
<div class="ln" style="top:584.08px">26</div>
<div class="cl" style="top:584.08px"><span class="d">    扩展点：</span></div>
<div class="ln" style="top:604.21px">27</div>
<div class="cl" style="top:604.21px"><span class="d">    - 替换模型：修改 _load_model() 方法</span></div>
<div class="ln" style="top:624.35px">28</div>
<div class="cl" style="top:624.35px"><span class="d">    - 添加后处理：覆写 _post_process() 方法</span></div>
<div class="ln" style="top:644.48px">29</div>
<div class="cl" style="top:644.48px"><span class="d">    - 自定义分词：覆写 _tokenize() 方法</span></div>
<div class="ln" style="top:664.62px">30</div>
<div class="cl" style="top:664.62px"><span class="d">    """</span></div>
<div class="ln" style="top:684.75px">31</div>
<div class="cl" style="top:684.75px"></div>
<div class="ln" style="top:704.89px">32</div>
<div class="cl" style="top:704.89px">    <span class="kw">def</span> <span class="fn">__init__</span><span class="p">(</span><span class="slf">self</span><span class="p">)</span>:</div>
<div class="ln" style="top:725.02px">33</div>
<div class="cl" style="top:725.02px">        <span class="kw">super</span><span class="p">()</span>.__init__<span class="p">(</span><span class="pr">name</span>=<span class="s">"BertDetector"</span>, <span class="pr">detector_type</span>=DetectorType.BERT<span class="p">)</span></div>
<div class="ln" style="top:745.16px">34</div>
<div class="cl" style="top:745.16px"></div>
<div class="ln" style="top:765.29px">35</div>
<div class="cl" style="top:765.29px">        <span class="sf">self</span>.model = None</div>
<div class="ln" style="top:785.43px">36</div>
<div class="cl" style="top:785.43px">        <span class="sf">self</span>.tokenizer = None</div>
<div class="ln" style="top:805.56px">37</div>
<div class="cl" style="top:805.56px">        <span class="sf">self</span>.onnx_session = None</div>
<div class="ln" style="top:825.70px">38</div>
<div class="cl" style="top:825.70px">        <span class="sf">self</span>.device = None</div>
<div class="ln" style="top:845.83px">39</div>
<div class="cl" style="top:845.83px">        <span class="sf">self</span>.use_gpu = False</div>
<div class="ln" style="top:865.97px">40</div>
<div class="cl" style="top:865.97px">        <span class="sf">self</span>.backend = settings.inference_backend  <span class="c"># pytorch / onnx</span></div>
<div class="ln" style="top:886.10px">41</div>
<div class="cl" style="top:886.10px"></div>
<div class="ln" style="top:906.24px">42</div>
<div class="cl" style="top:906.24px">        <span class="c"># 敏感类型标签映射（需要与训练时一致）</span></div>
<div class="ln" style="top:926.37px">43</div>
<div class="cl" style="top:926.37px">        <span class="sf">self</span>.label_map = <span class="p">{</span></div>
<div class="ln" style="top:946.51px">44</div>
<div class="cl" style="top:946.51px">            <span class="n">0</span>: <span class="s">"safe"</span>,           <span class="c"># 非敏感</span></div>
<div class="ln" style="top:966.64px">45</div>
<div class="cl" style="top:966.64px">            <span class="n">1</span>: <span class="s">"id_card"</span>,        <span class="c"># 身份证</span></div>
<div class="ln" style="top:986.78px">46</div>
<div class="cl" style="top:986.78px">            <span class="n">2</span>: <span class="s">"phone"</span>,          <span class="c"># 手机号</span></div>
<div class="ln" style="top:1006.91px">47</div>
<div class="cl" style="top:1006.91px">            <span class="n">3</span>: <span class="s">"email"</span>,          <span class="c"># 邮箱</span></div>
<div class="ln" style="top:1027.05px">48</div>
<div class="cl" style="top:1027.05px">            <span class="n">4</span>: <span class="s">"bank_card"</span>,      <span class="c"># 银行卡</span></div>
<div class="ln" style="top:1047.18px">49</div>
<div class="cl" style="top:1047.18px">            <span class="n">5</span>: <span class="s">"address"</span>,        <span class="c"># 地址</span></div>
<div class="ln" style="top:1067.32px">50</div>
<div class="cl" style="top:1067.32px">            <span class="n">6</span>: <span class="s">"name"</span>,           <span class="c"># 姓名</span></div>
  </div>
  <div class="ig" style="left:105.300px;top:738px;height:337px"></div>
  <div class="ig" style="left:137.600px;top:960px;height:115px"></div>
  <div id="ovr"></div>
  <div class="mk" style="left:1317px;top:312px;width:5px;height:6px"></div>
  <div class="mk" style="left:1317px;top:412px;width:5px;height:6px"></div>
  <div class="mk" style="left:1317px;top:439px;width:5px;height:6px"></div>
  <div id="ovg"></div>
  <div class="mk" style="left:1311.500px;top:91px;width:15.500px;height:2px;background:rgba(225,245,232,.8)"></div>
</div>

<!-- ================= CHAT ================= -->
<div id="chat">
  <div id="ctab"><span>构建个人敏感信息检测引擎</span></div>
  <div id="bubble">
    <div style="top:8.700px">你现在是一个顶级的AI架构师</div>
    <div style="top:30.200px">与资深Python工程专家。</div>
    <div style="top:51.700px">我想实现一个个人敏感信息检</div>
    <div style="top:73.200px;color:#6a6a6a">测引擎，基于 Python 开发</div>
    <span class="fade"></span>
  </div>
<div class="fr" style="top:95px;height:78.5px"></div>
<div class="bc" style="left:21px;top:95.5px;height:60.0px"><div class="" style="top:40.0px">"""</div></div>
<span class="cv" style="left:125.5px;top:157.5px"><svg viewBox="0 0 16 16" width="16" height="16"><path d="M5 6.500l3 3 3-3" fill="none" stroke="#6c6c6c" stroke-width="1.200" stroke-linecap="round" stroke-linejoin="round"/></svg></span>
<div class="fr" style="top:186.5px;height:149.0px"></div><div class="bh" style="left:20px;top:186px"><span class="abs sm" style="left:9.500px;top:7px;width:16px;height:16px"><svg class="py" viewBox="0 0 16 16"><path d="M7.9 1.2c-2.6 0-2.9 1.1-2.9 1.1v1.9h3v.6H3.6S1.5 4.6 1.5 7.9c0 3.300 1.800 3.200 1.800 3.200h1.300V9.400s-.1-1.800 1.800-1.800h3s1.700 0 1.700-1.700V3s.3-1.800-3.200-1.800zM6.300 2.300a.55.55 0 1 1 0 1.100.55.55 0 0 1 0-1.100z" fill="#4aa5cf"/><path d="M8.100 14.800c2.600 0 2.900-1.100 2.900-1.100v-1.900H8v-.6h4.400s2.100.2 2.100-3.100c0-3.300-1.800-3.200-1.800-3.200h-1.300v1.700s.1 1.800-1.800 1.800h-3s-1.700 0-1.700 1.700V13s-.3 1.800 3.200 1.800zm1.600-1.100a.55.55 0 1 1 0-1.100.55.55 0 0 1 0 1.100z" fill="#3d93bf"/></svg></span><span style="left:37.5px;letter-spacing:0px">...detector.py</span><span class="g" style="left:127.7px">(new)</span><span class="g" style="left:170.2px;letter-spacing:.25px">+390</span></div><div class="bc" style="left:21px;top:217.5px;height:100.0px"><div class="" style="top:0.0px">"""</div><div class="" style="top:20.0px">正则表达式检测器（一级检测）</div><div class="" style="top:40.0px">高性能、低延迟的规则匹配检测</div><div class="" style="top:60.0px">扩展点：可添加新的正则规则、支持热更新</div><div class="" style="top:80.0px">"""</div></div><span class="cv" style="left:125.5px;top:319.0px"><svg viewBox="0 0 16 16" width="16" height="16"><path d="M5 6.500l3 3 3-3" fill="none" stroke="#6c6c6c" stroke-width="1.200" stroke-linecap="round" stroke-linejoin="round"/></svg></span>
<div class="fr" style="top:348.5px;height:149.0px"></div><div class="bh" style="left:20px;top:348px"><span class="abs sm" style="left:9.500px;top:7px;width:16px;height:16px"><svg class="py" viewBox="0 0 16 16"><path d="M7.9 1.2c-2.6 0-2.9 1.1-2.9 1.1v1.9h3v.6H3.6S1.5 4.6 1.5 7.9c0 3.300 1.800 3.200 1.800 3.200h1.300V9.400s-.1-1.800 1.800-1.800h3s1.700 0 1.700-1.700V3s.3-1.800-3.200-1.800zM6.300 2.300a.55.55 0 1 1 0 1.100.55.55 0 0 1 0-1.100z" fill="#4aa5cf"/><path d="M8.100 14.800c2.600 0 2.900-1.100 2.900-1.100v-1.900H8v-.6h4.400s2.100.2 2.100-3.100c0-3.300-1.800-3.200-1.800-3.200h-1.300v1.700s.1 1.800-1.800 1.800h-3s-1.700 0-1.700 1.700V13s-.3 1.800 3.200 1.800zm1.600-1.100a.55.55 0 1 1 0-1.100.55.55 0 0 1 0 1.100z" fill="#3d93bf"/></svg></span><span style="left:37.5px;letter-spacing:0px">...detector.py</span><span class="g" style="left:127.7px">(new)</span><span class="g" style="left:170.2px;letter-spacing:.25px">+382</span></div><div class="bc" style="left:21px;top:379.5px;height:100.0px"><div class="" style="top:0.0px">"""</div><div class="" style="top:20.0px">BERT 模型检测器（二级检测）</div><div class="" style="top:40.0px">基于 Transformer 的语义理解检测</div><div class="" style="top:60.0px">支持 PyTorch 和 ONNX Runtime 两种推理后端</div><div class="" style="top:80.0px">扩展点：可替换为其他预训练模型</div></div><span class="cv" style="left:125.5px;top:481.0px"><svg viewBox="0 0 16 16" width="16" height="16"><path d="M5 6.500l3 3 3-3" fill="none" stroke="#6c6c6c" stroke-width="1.200" stroke-linecap="round" stroke-linejoin="round"/></svg></span>
<div class="fr" style="top:510.5px;height:149.0px"></div><div class="bh" style="left:20px;top:510px"><span class="abs sm" style="left:9.500px;top:7px;width:16px;height:16px"><svg class="py" viewBox="0 0 16 16"><path d="M7.9 1.2c-2.6 0-2.9 1.1-2.9 1.1v1.9h3v.6H3.6S1.5 4.6 1.5 7.9c0 3.300 1.800 3.200 1.800 3.200h1.300V9.400s-.1-1.800 1.800-1.800h3s1.700 0 1.700-1.700V3s.3-1.800-3.200-1.800zM6.300 2.300a.55.55 0 1 1 0 1.100.55.55 0 0 1 0-1.100z" fill="#4aa5cf"/><path d="M8.100 14.800c2.600 0 2.900-1.100 2.900-1.100v-1.900H8v-.6h4.400s2.100.2 2.100-3.100c0-3.300-1.800-3.200-1.800-3.200h-1.300v1.700s.1 1.800-1.800 1.800h-3s-1.700 0-1.700 1.700V13s-.3 1.800 3.200 1.800zm1.600-1.100a.55.55 0 1 1 0-1.100.55.55 0 0 1 0 1.100z" fill="#3d93bf"/></svg></span><span style="left:37.5px;letter-spacing:0px">...detector.py</span><span class="g" style="left:127.7px">(new)</span><span class="g" style="left:170.2px;letter-spacing:.25px">+375</span></div><div class="bc" style="left:21px;top:541.5px;height:100.0px"><div class="" style="top:0.0px">"""</div><div class="" style="top:20.0px">大模型检测器（三级检测）</div><div class="" style="top:40.0px">作为兜底检测，处理复杂场景和边缘情况</div><div class="" style="top:60.0px">支持多种 LLM 提供商（OpenAI、Anthropic、本地模型）</div><div class="" style="top:80.0px">扩展点：可实现新的 LLM 提供商接口</div></div><span class="cv" style="left:125.5px;top:643.0px"><svg viewBox="0 0 16 16" width="16" height="16"><path d="M5 6.500l3 3 3-3" fill="none" stroke="#6c6c6c" stroke-width="1.200" stroke-linecap="round" stroke-linejoin="round"/></svg></span>
<div class="fr" style="top:672.5px;height:109.5px"></div>
<div class="bh" style="left:20px;top:672px"><span class="abs sm" style="left:9.500px;top:7px;width:16px;height:16px"><svg class="py" viewBox="0 0 16 16"><path d="M7.9 1.2c-2.6 0-2.9 1.1-2.9 1.1v1.9h3v.6H3.6S1.5 4.6 1.5 7.9c0 3.300 1.800 3.200 1.800 3.200h1.300V9.400s-.1-1.800 1.800-1.800h3s1.700 0 1.700-1.700V3s.3-1.800-3.200-1.800zM6.300 2.300a.55.55 0 1 1 0 1.100.55.55 0 0 1 0-1.100z" fill="#4aa5cf"/><path d="M8.100 14.800c2.600 0 2.900-1.100 2.900-1.100v-1.900H8v-.6h4.400s2.100.2 2.100-3.100c0-3.300-1.800-3.200-1.800-3.200h-1.300v1.700s.1 1.800-1.800 1.800h-3s-1.700 0-1.700 1.700V13s-.3 1.800 3.200 1.800zm1.600-1.100a.55.55 0 1 1 0-1.100.55.55 0 0 1 0 1.100z" fill="#3d93bf"/></svg></span><span style="left:33.5px;letter-spacing:-0.2px">__init__.py</span><span class="g" style="left:108.7px">(new)</span><span class="g" style="left:151.2px;letter-spacing:.25px">+2</span></div>
<div class="bc red" style="left:21px;top:710.5px;height:20px"></div>
<div class="bc" style="left:21px;top:730.5px;height:40.0px"><div class="cm" style="top:0.0px"># Services module</div></div>
<div class="fr" style="top:794.5px;height:149.0px"></div><div class="bh" style="left:20px;top:794px"><span class="abs sm" style="left:9.500px;top:7px;width:16px;height:16px"><svg class="py" viewBox="0 0 16 16"><path d="M7.9 1.2c-2.6 0-2.9 1.1-2.9 1.1v1.9h3v.6H3.6S1.5 4.6 1.5 7.9c0 3.300 1.800 3.200 1.800 3.200h1.300V9.400s-.1-1.800 1.800-1.800h3s1.700 0 1.700-1.700V3s.3-1.800-3.200-1.800zM6.300 2.300a.55.55 0 1 1 0 1.100.55.55 0 0 1 0-1.100z" fill="#4aa5cf"/><path d="M8.100 14.800c2.600 0 2.900-1.100 2.900-1.100v-1.900H8v-.6h4.400s2.100.2 2.100-3.100c0-3.300-1.800-3.200-1.800-3.200h-1.300v1.700s.1 1.800-1.800 1.800h-3s-1.700 0-1.700 1.700V13s-.3 1.800 3.200 1.800zm1.600-1.100a.55.55 0 1 1 0-1.100.55.55 0 0 1 0 1.100z" fill="#3d93bf"/></svg></span><span style="left:33.5px;letter-spacing:0px">...hestrator.py</span><span class="g" style="left:127.7px">(new)</span><span class="g" style="left:170.2px;letter-spacing:.25px">+428</span></div><div class="bc" style="left:21px;top:825.5px;height:100.0px"><div class="" style="top:0.0px">"""</div><div class="" style="top:20.0px">检测编排器</div><div class="" style="top:40.0px">实现三级检测体系的调度逻辑</div><div class="" style="top:60.0px">负责协调各检测器的执行顺序和决策</div><div class="" style="top:80.0px">扩展点：可添加新的检测策略、并行执行</div></div><span class="cv" style="left:125.5px;top:927.0px"><svg viewBox="0 0 16 16" width="16" height="16"><path d="M5 6.500l3 3 3-3" fill="none" stroke="#6c6c6c" stroke-width="1.200" stroke-linecap="round" stroke-linejoin="round"/></svg></span>
<div class="th" style="left:22.5px;top:954.5px"><span style="color:#c2c2c2">Thought</span> <span style="color:#7d7d7d">for 1s</span></div>
<div class="fr" style="top:985.5px;height:59.5px"></div><div class="bh" style="left:20px;top:985px"><span class="abs sm" style="left:9.500px;top:7px;width:16px;height:16px"><svg class="py" viewBox="0 0 16 16"><path d="M7.9 1.2c-2.6 0-2.9 1.1-2.9 1.1v1.9h3v.6H3.6S1.5 4.6 1.5 7.9c0 3.300 1.800 3.200 1.800 3.200h1.300V9.400s-.1-1.800 1.800-1.800h3s1.700 0 1.700-1.700V3s.3-1.800-3.200-1.800zM6.300 2.300a.55.55 0 1 1 0 1.100.55.55 0 0 1 0-1.100z" fill="#4aa5cf"/><path d="M8.100 14.800c2.600 0 2.900-1.100 2.900-1.100v-1.900H8v-.6h4.400s2.100.2 2.100-3.100c0-3.300-1.800-3.200-1.800-3.200h-1.300v1.700s.1 1.800-1.800 1.800h-3s-1.700 0-1.700 1.700V13s-.3 1.800 3.200 1.800zm1.600-1.100a.55.55 0 1 1 0-1.100.55.55 0 0 1 0 1.100z" fill="#3d93bf"/></svg></span><span style="left:35.5px;letter-spacing:-0.25px">...manager.py</span><span class="g" style="left:127.7px">(new)</span><span class="g" style="left:170.2px;letter-spacing:.25px">+391</span></div><div class="bc" style="left:21px;top:1016.5px;height:28.5px"><div class="" style="top:0.0px">"""</div><div class="" style="top:20.0px">管理器</div></div>
  <div id="bbar">
    <svg class="abs" style="left:9px;top:6px" width="16" height="16" viewBox="0 0 16 16"><path d="M6.500 5l3 3-3 3" fill="none" stroke="#8a8a8a" stroke-width="1.300" stroke-linecap="round" stroke-linejoin="round"/></svg>
    <span class="abs" style="left:30px;top:0;line-height:28px;font-size:13.900px;color:#686868;white-space:pre">24 Files</span>
    <div id="halo"></div>
    <div id="review">Review</div>
  </div>
  <div id="inp"><span>Add a follow-up</span></div>
  <svg class="abs" style="left:177.700px;top:11px" width="18" height="18" viewBox="0 0 18 18"><path d="M9 3.500v11M3.500 9h11" stroke="#8a8a8a" stroke-width="1.200" stroke-linecap="round"/></svg>
  <svg class="abs" style="left:206.500px;top:11px" width="18" height="18" viewBox="0 0 18 18" fill="none" stroke="#8a8a8a" stroke-width="1.200" stroke-linecap="round"><circle cx="9" cy="9" r="6.600"/><path d="M9 5v4.200l2.500 1.500"/></svg>
  <svg class="abs" style="left:236px;top:11px" width="18" height="18" viewBox="0 0 18 18" fill="#8a8a8a"><circle cx="4" cy="9" r="1.200"/><circle cx="9" cy="9" r="1.200"/><circle cx="14" cy="9" r="1.200"/></svg>
</div>
<div id="chatborder"></div>

<!-- ================= TOAST ================= -->
<div id="toast">
  <svg class="abs" style="left:6.200px;top:11.500px" width="15" height="15" viewBox="0 0 15 15"><circle cx="7.500" cy="7.500" r="5.300" fill="#15253a" stroke="#3a7ed0" stroke-width="1.200"/><path d="M6 6.200c0-1 .7-1.500 1.500-1.500s1.500.5 1.500 1.400c0 1.100-1.500 1.100-1.500 2.300" fill="none" stroke="#4a8ee0" stroke-width="1.100" stroke-linecap="round"/><circle cx="7.500" cy="10.200" r=".7" fill="#4a8ee0"/></svg>
  <div style="top:9px">Do you want to install the recommended</div>
  <div style="top:27px;letter-spacing:.19px">'Python' extension from ms-python for the</div>
  <svg class="abs" style="left:321.700px;top:12px" width="14" height="14" viewBox="0 0 14 14" fill="none" stroke="#b4b4b4"><circle cx="7" cy="7" r="1.800" stroke-width="1.100"/><circle cx="7" cy="7" r="4.300" stroke-width="1.100"/><path d="M7 1v1.700M7 11.300V13M1 7h1.700M11.300 7H13M2.760 2.760l1.200 1.200M10.040 10.040l1.200 1.200M2.760 11.240l1.200-1.200M10.040 3.960l1.200-1.200" stroke-width="1.700"/></svg>
  <svg class="abs" style="left:347px;top:13px" width="12" height="12" viewBox="0 0 12 12"><path d="M2.300 2.300l7.400 7.400M9.700 2.300l-7.400 7.400" stroke="#cfcfcf" stroke-width="1.250" stroke-linecap="round"/></svg>
</div>
</div>
</body>
</html>
